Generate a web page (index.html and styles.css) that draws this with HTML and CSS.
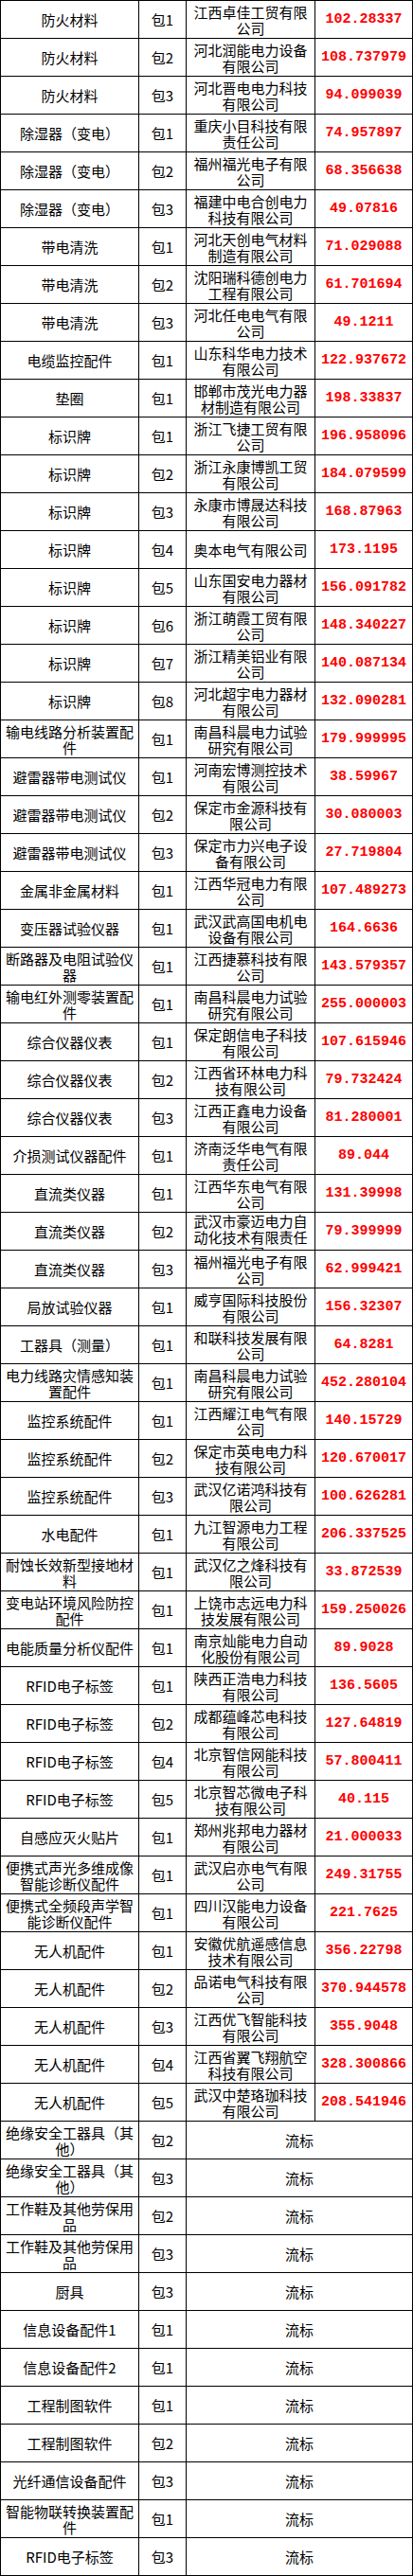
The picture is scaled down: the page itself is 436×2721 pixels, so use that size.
FILE: index.html
```html
<!DOCTYPE html>
<html lang="zh-CN">
<head>
<meta charset="utf-8">
<title>中标结果</title>
<link rel="stylesheet" href="styles.css">
</head>
<body>
<div class="sheet">
  <div class="cell"><span>防火材料</span></div><div class="cell"><span>包1</span></div><div class="cell co"><span>江西卓佳工贸有限公司</span></div><div class="cell num"><span>102.28337</span></div>
  <div class="cell"><span>防火材料</span></div><div class="cell"><span>包2</span></div><div class="cell co"><span>河北润能电力设备有限公司</span></div><div class="cell num"><span>108.737979</span></div>
  <div class="cell"><span>防火材料</span></div><div class="cell"><span>包3</span></div><div class="cell co"><span>河北晋电电力科技有限公司</span></div><div class="cell num"><span>94.099039</span></div>
  <div class="cell"><span>除湿器（变电）</span></div><div class="cell"><span>包1</span></div><div class="cell co"><span>重庆小目科技有限责任公司</span></div><div class="cell num"><span>74.957897</span></div>
  <div class="cell"><span>除湿器（变电）</span></div><div class="cell"><span>包2</span></div><div class="cell co"><span>福州福光电子有限公司</span></div><div class="cell num"><span>68.356638</span></div>
  <div class="cell"><span>除湿器（变电）</span></div><div class="cell"><span>包3</span></div><div class="cell co"><span>福建中电合创电力科技有限公司</span></div><div class="cell num"><span>49.07816</span></div>
  <div class="cell"><span>带电清洗</span></div><div class="cell"><span>包1</span></div><div class="cell co"><span>河北天创电气材料制造有限公司</span></div><div class="cell num"><span>71.029088</span></div>
  <div class="cell"><span>带电清洗</span></div><div class="cell"><span>包2</span></div><div class="cell co"><span>沈阳瑞科德创电力工程有限公司</span></div><div class="cell num"><span>61.701694</span></div>
  <div class="cell"><span>带电清洗</span></div><div class="cell"><span>包3</span></div><div class="cell co"><span>河北任电电气有限公司</span></div><div class="cell num"><span>49.1211</span></div>
  <div class="cell"><span>电缆监控配件</span></div><div class="cell"><span>包1</span></div><div class="cell co"><span>山东科华电力技术有限公司</span></div><div class="cell num"><span>122.937672</span></div>
  <div class="cell"><span>垫圈</span></div><div class="cell"><span>包1</span></div><div class="cell co"><span>邯郸市茂光电力器材制造有限公司</span></div><div class="cell num"><span>198.33837</span></div>
  <div class="cell"><span>标识牌</span></div><div class="cell"><span>包1</span></div><div class="cell co"><span>浙江飞捷工贸有限公司</span></div><div class="cell num"><span>196.958096</span></div>
  <div class="cell"><span>标识牌</span></div><div class="cell"><span>包2</span></div><div class="cell co"><span>浙江永康博凯工贸有限公司</span></div><div class="cell num"><span>184.079599</span></div>
  <div class="cell"><span>标识牌</span></div><div class="cell"><span>包3</span></div><div class="cell co"><span>永康市博晟达科技有限公司</span></div><div class="cell num"><span>168.87963</span></div>
  <div class="cell"><span>标识牌</span></div><div class="cell"><span>包4</span></div><div class="cell co"><span>奥本电气有限公司</span></div><div class="cell num"><span>173.1195</span></div>
  <div class="cell"><span>标识牌</span></div><div class="cell"><span>包5</span></div><div class="cell co"><span>山东国安电力器材有限公司</span></div><div class="cell num"><span>156.091782</span></div>
  <div class="cell"><span>标识牌</span></div><div class="cell"><span>包6</span></div><div class="cell co"><span>浙江萌霞工贸有限公司</span></div><div class="cell num"><span>148.340227</span></div>
  <div class="cell"><span>标识牌</span></div><div class="cell"><span>包7</span></div><div class="cell co"><span>浙江精美铝业有限公司</span></div><div class="cell num"><span>140.087134</span></div>
  <div class="cell"><span>标识牌</span></div><div class="cell"><span>包8</span></div><div class="cell co"><span>河北超宇电力器材有限公司</span></div><div class="cell num"><span>132.090281</span></div>
  <div class="cell"><span>输电线路分析装置配件</span></div><div class="cell"><span>包1</span></div><div class="cell co"><span>南昌科晨电力试验研究有限公司</span></div><div class="cell num"><span>179.999995</span></div>
  <div class="cell"><span>避雷器带电测试仪</span></div><div class="cell"><span>包1</span></div><div class="cell co"><span>河南宏博测控技术有限公司</span></div><div class="cell num"><span>38.59967</span></div>
  <div class="cell"><span>避雷器带电测试仪</span></div><div class="cell"><span>包2</span></div><div class="cell co"><span>保定市金源科技有限公司</span></div><div class="cell num"><span>30.080003</span></div>
  <div class="cell"><span>避雷器带电测试仪</span></div><div class="cell"><span>包3</span></div><div class="cell co"><span>保定市力兴电子设备有限公司</span></div><div class="cell num"><span>27.719804</span></div>
  <div class="cell"><span>金属非金属材料</span></div><div class="cell"><span>包1</span></div><div class="cell co"><span>江西华冠电力有限公司</span></div><div class="cell num"><span>107.489273</span></div>
  <div class="cell"><span>变压器试验仪器</span></div><div class="cell"><span>包1</span></div><div class="cell co"><span>武汉武高国电机电设备有限公司</span></div><div class="cell num"><span>164.6636</span></div>
  <div class="cell"><span>断路器及电阻试验仪器</span></div><div class="cell"><span>包1</span></div><div class="cell co"><span>江西捷慕科技有限公司</span></div><div class="cell num"><span>143.579357</span></div>
  <div class="cell"><span>输电红外测零装置配件</span></div><div class="cell"><span>包1</span></div><div class="cell co"><span>南昌科晨电力试验研究有限公司</span></div><div class="cell num"><span>255.000003</span></div>
  <div class="cell"><span>综合仪器仪表</span></div><div class="cell"><span>包1</span></div><div class="cell co"><span>保定朗信电子科技有限公司</span></div><div class="cell num"><span>107.615946</span></div>
  <div class="cell"><span>综合仪器仪表</span></div><div class="cell"><span>包2</span></div><div class="cell co"><span>江西省环林电力科技有限公司</span></div><div class="cell num"><span>79.732424</span></div>
  <div class="cell"><span>综合仪器仪表</span></div><div class="cell"><span>包3</span></div><div class="cell co"><span>江西正鑫电力设备有限公司</span></div><div class="cell num"><span>81.280001</span></div>
  <div class="cell"><span>介损测试仪器配件</span></div><div class="cell"><span>包1</span></div><div class="cell co"><span>济南泛华电气有限责任公司</span></div><div class="cell num"><span>89.044</span></div>
  <div class="cell"><span>直流类仪器</span></div><div class="cell"><span>包1</span></div><div class="cell co"><span>江西华东电气有限公司</span></div><div class="cell num"><span>131.39998</span></div>
  <div class="cell"><span>直流类仪器</span></div><div class="cell"><span>包2</span></div><div class="cell co"><span>武汉市豪迈电力自动化技术有限责任公司</span></div><div class="cell num"><span>79.399999</span></div>
  <div class="cell"><span>直流类仪器</span></div><div class="cell"><span>包3</span></div><div class="cell co"><span>福州福光电子有限公司</span></div><div class="cell num"><span>62.999421</span></div>
  <div class="cell"><span>局放试验仪器</span></div><div class="cell"><span>包1</span></div><div class="cell co"><span>威亨国际科技股份有限公司</span></div><div class="cell num"><span>156.32307</span></div>
  <div class="cell"><span>工器具（测量）</span></div><div class="cell"><span>包1</span></div><div class="cell co"><span>和联科技发展有限公司</span></div><div class="cell num"><span>64.8281</span></div>
  <div class="cell"><span>电力线路灾情感知装置配件</span></div><div class="cell"><span>包1</span></div><div class="cell co"><span>南昌科晨电力试验研究有限公司</span></div><div class="cell num"><span>452.280104</span></div>
  <div class="cell"><span>监控系统配件</span></div><div class="cell"><span>包1</span></div><div class="cell co"><span>江西耀江电气有限公司</span></div><div class="cell num"><span>140.15729</span></div>
  <div class="cell"><span>监控系统配件</span></div><div class="cell"><span>包2</span></div><div class="cell co"><span>保定市英电电力科技有限公司</span></div><div class="cell num"><span>120.670017</span></div>
  <div class="cell"><span>监控系统配件</span></div><div class="cell"><span>包3</span></div><div class="cell co"><span>武汉亿诺鸿科技有限公司</span></div><div class="cell num"><span>100.626281</span></div>
  <div class="cell"><span>水电配件</span></div><div class="cell"><span>包1</span></div><div class="cell co"><span>九江智源电力工程有限公司</span></div><div class="cell num"><span>206.337525</span></div>
  <div class="cell"><span>耐蚀长效新型接地材料</span></div><div class="cell"><span>包1</span></div><div class="cell co"><span>武汉亿之烽科技有限公司</span></div><div class="cell num"><span>33.872539</span></div>
  <div class="cell"><span>变电站环境风险防控配件</span></div><div class="cell"><span>包1</span></div><div class="cell co"><span>上饶市志远电力科技发展有限公司</span></div><div class="cell num"><span>159.250026</span></div>
  <div class="cell"><span>电能质量分析仪配件</span></div><div class="cell"><span>包1</span></div><div class="cell co"><span>南京灿能电力自动化股份有限公司</span></div><div class="cell num"><span>89.9028</span></div>
  <div class="cell"><span>RFID电子标签</span></div><div class="cell"><span>包1</span></div><div class="cell co"><span>陕西正浩电力科技有限公司</span></div><div class="cell num"><span>136.5605</span></div>
  <div class="cell"><span>RFID电子标签</span></div><div class="cell"><span>包2</span></div><div class="cell co"><span>成都蕴峰芯电科技有限公司</span></div><div class="cell num"><span>127.64819</span></div>
  <div class="cell"><span>RFID电子标签</span></div><div class="cell"><span>包4</span></div><div class="cell co"><span>北京智信网能科技有限公司</span></div><div class="cell num"><span>57.800411</span></div>
  <div class="cell"><span>RFID电子标签</span></div><div class="cell"><span>包5</span></div><div class="cell co"><span>北京智芯微电子科技有限公司</span></div><div class="cell num"><span>40.115</span></div>
  <div class="cell"><span>自感应灭火贴片</span></div><div class="cell"><span>包1</span></div><div class="cell co"><span>郑州兆邦电力器材有限公司</span></div><div class="cell num"><span>21.000033</span></div>
  <div class="cell"><span>便携式声光多维成像智能诊断仪配件</span></div><div class="cell"><span>包1</span></div><div class="cell co"><span>武汉启亦电气有限公司</span></div><div class="cell num"><span>249.31755</span></div>
  <div class="cell"><span>便携式全频段声学智能诊断仪配件</span></div><div class="cell"><span>包1</span></div><div class="cell co"><span>四川汉能电力设备有限公司</span></div><div class="cell num"><span>221.7625</span></div>
  <div class="cell"><span>无人机配件</span></div><div class="cell"><span>包1</span></div><div class="cell co"><span>安徽优航遥感信息技术有限公司</span></div><div class="cell num"><span>356.22798</span></div>
  <div class="cell"><span>无人机配件</span></div><div class="cell"><span>包2</span></div><div class="cell co"><span>品诺电气科技有限公司</span></div><div class="cell num"><span>370.944578</span></div>
  <div class="cell"><span>无人机配件</span></div><div class="cell"><span>包3</span></div><div class="cell co"><span>江西优飞智能科技有限公司</span></div><div class="cell num"><span>355.9048</span></div>
  <div class="cell"><span>无人机配件</span></div><div class="cell"><span>包4</span></div><div class="cell co"><span>江西省翼飞翔航空科技有限公司</span></div><div class="cell num"><span>328.300866</span></div>
  <div class="cell"><span>无人机配件</span></div><div class="cell"><span>包5</span></div><div class="cell co"><span>武汉中楚珞珈科技有限公司</span></div><div class="cell num"><span>208.541946</span></div>
  <div class="cell"><span>绝缘安全工器具（其他）</span></div><div class="cell"><span>包2</span></div><div class="cell fail"><span>流标</span></div>
  <div class="cell"><span>绝缘安全工器具（其他）</span></div><div class="cell"><span>包3</span></div><div class="cell fail"><span>流标</span></div>
  <div class="cell"><span>工作鞋及其他劳保用品</span></div><div class="cell"><span>包2</span></div><div class="cell fail"><span>流标</span></div>
  <div class="cell"><span>工作鞋及其他劳保用品</span></div><div class="cell"><span>包3</span></div><div class="cell fail"><span>流标</span></div>
  <div class="cell"><span>厨具</span></div><div class="cell"><span>包3</span></div><div class="cell fail"><span>流标</span></div>
  <div class="cell"><span>信息设备配件1</span></div><div class="cell"><span>包1</span></div><div class="cell fail"><span>流标</span></div>
  <div class="cell"><span>信息设备配件2</span></div><div class="cell"><span>包1</span></div><div class="cell fail"><span>流标</span></div>
  <div class="cell"><span>工程制图软件</span></div><div class="cell"><span>包1</span></div><div class="cell fail"><span>流标</span></div>
  <div class="cell"><span>工程制图软件</span></div><div class="cell"><span>包2</span></div><div class="cell fail"><span>流标</span></div>
  <div class="cell"><span>光纤通信设备配件</span></div><div class="cell"><span>包3</span></div><div class="cell fail"><span>流标</span></div>
  <div class="cell"><span>智能物联转换装置配件</span></div><div class="cell"><span>包1</span></div><div class="cell fail"><span>流标</span></div>
  <div class="cell"><span>RFID电子标签</span></div><div class="cell"><span>包3</span></div><div class="cell fail"><span>流标</span></div>
</div>
</body>
</html>
```

FILE: styles.css
```css
html, body {
  margin: 0;
  padding: 0;
  background: #ffffff;
}

.sheet {
  display: grid;
  grid-template-columns: 145px 49px 135px 102px;
  grid-auto-rows: 39px;
  gap: 1px;
  padding: 1px;
  width: 436px;
  box-sizing: border-box;
  background: #000000;
  font-family: "Noto Sans CJK SC", "Noto Sans", sans-serif;
  font-size: 15px;
  line-height: 17px;
  color: #000000;
}

.cell {
  background: #ffffff;
  display: flex;
  flex-direction: column;
  overflow: hidden;
  padding: 0 2px;
  text-align: center;
}

.cell > span {
  margin: auto 0;
}

.num {
  font-family: "Liberation Mono", monospace;
  font-weight: bold;
  color: #ff0000;
  padding: 0;
  white-space: nowrap;
}

.fail {
  grid-column: span 2;
}
```
